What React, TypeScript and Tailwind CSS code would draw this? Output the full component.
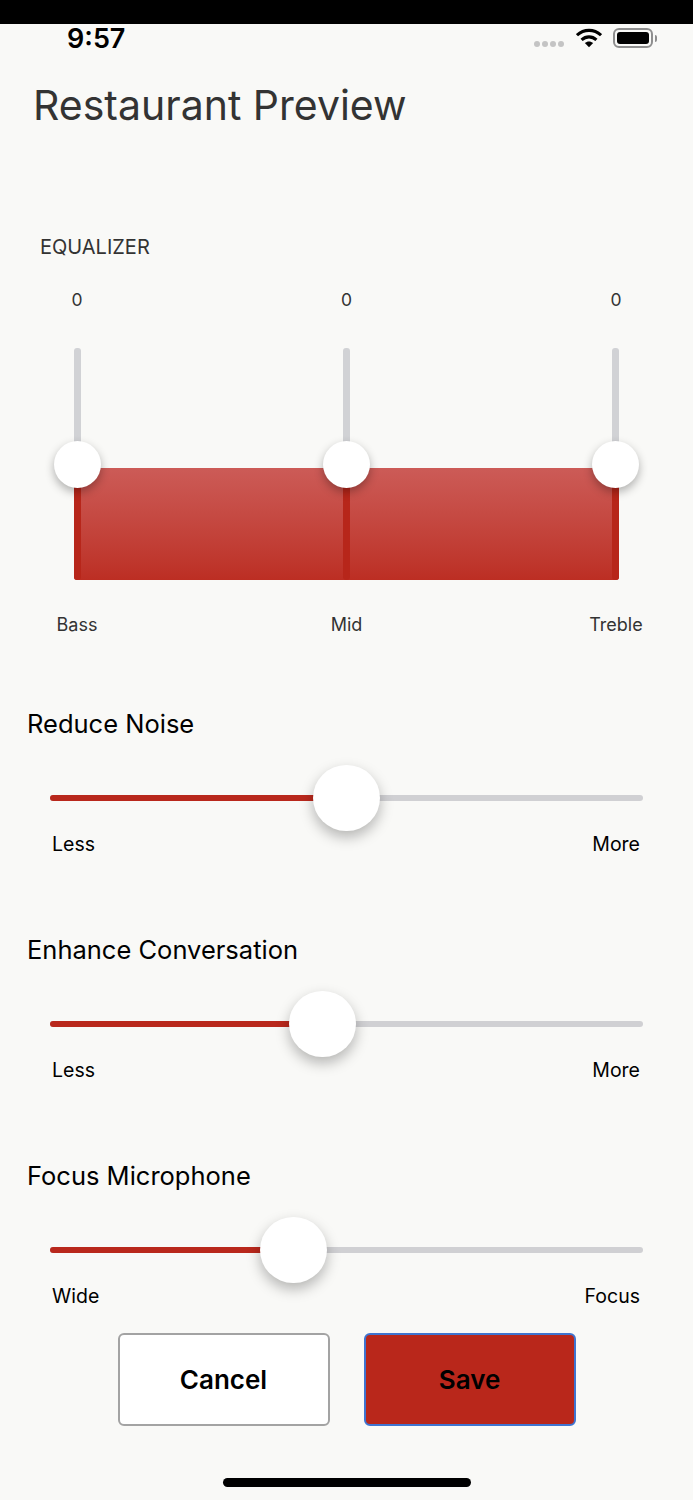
import React from "react";

function Eq() {
  const bands = [
    { v: "0", l: "Bass" },
    { v: "0", l: "Mid" },
    { v: "0", l: "Treble" },
  ];
  return (
    <div className="mt-[104px] px-[27px]">
      <div className="pl-[13px] text-[20px] leading-[24px] text-[#333333]">EQUALIZER</div>
      <div className="mt-[29px] flex justify-between px-[10px] text-[17.5px] leading-[24px] text-[#333333]">
        {bands.map((b, i) => (
          <div key={i} className="w-[80px] text-center">{b.v}</div>
        ))}
      </div>
      <div className="relative mx-[47px] mt-[36px] h-[232px]">
        <div className="absolute bottom-0 left-0 right-0 h-[112px] rounded-[3px] bg-gradient-to-b from-[#cc5b57] to-[#bc2e23]" />
        <div className="relative flex h-full justify-between">
          {bands.map((b, i) => (
            <div key={i} className="relative h-full w-[7px]">
              <div className="h-full w-full rounded-[3px] bg-gradient-to-b from-[#d1d2d5] from-50% to-[#b7261a] to-50%" />
              <div className="absolute left-[-20px] top-[93px] h-[47px] w-[47px] rounded-full bg-white shadow-[0_4px_10px_rgba(0,0,0,0.3)]" />
            </div>
          ))}
        </div>
      </div>
      <div className="mt-[33px] flex justify-between px-[10px] text-[18px] leading-[24px] text-[#333333]">
        {bands.map((b, i) => (
          <div key={i} className="w-[80px] text-center">{b.l}</div>
        ))}
      </div>
    </div>
  );
}

function Slider({ title, left, right, pct, mt }: { title: string; left: string; right: string; pct: number; mt: string }) {
  return (
    <div className={`${mt} px-[27px]`}>
      <div className="text-[25.5px] leading-[32px] text-black">{title}</div>
      <div className="relative mx-[23px] mt-[55px] h-[6px] rounded-full bg-[#d0d0d3]">
        <div className="h-full rounded-full bg-[#b9281c]" style={{ width: `${pct}px` }} />
        <div
          className="absolute top-[-30px] ml-[-33px] h-[66px] w-[67px] rounded-full bg-white shadow-[0_6px_14px_rgba(0,0,0,0.28)]"
          style={{ left: `${pct}px` }}
        />
      </div>
      <div className="mt-[31px] flex justify-between pl-[25px] pr-[26px] text-[19.5px] leading-[24px] text-black">
        <span>{left}</span>
        <span>{right}</span>
      </div>
    </div>
  );
}

export default function App() {
  return (
    <div className="flex h-[1500px] w-[693px] flex-col overflow-hidden bg-[#f9f9f7] font-['Inter',sans-serif]">
      <div className="h-[24px] shrink-0 bg-black" />
      <div className="flex h-[28px] items-center justify-between pl-[67px] pr-[36px]">
        <span className="mt-[2px] text-[27px] font-semibold leading-[28px] text-black">9:57</span>
        <div className="flex items-center">
          <div className="mr-[12px] mt-[12px] flex gap-[2px]">
            <div className="h-[6px] w-[6px] rounded-full bg-[#c4c4c4]" />
            <div className="h-[6px] w-[6px] rounded-full bg-[#c4c4c4]" />
            <div className="h-[6px] w-[6px] rounded-full bg-[#c4c4c4]" />
            <div className="h-[6px] w-[6px] rounded-full bg-[#c4c4c4]" />
          </div>
          <svg width="26" height="20" viewBox="0 0 28 21" className="mr-[11px]">
            <path d="M1 7.5C8.5 0.5 19.5 0.5 27 7.5" fill="none" stroke="#000" strokeWidth="3.4" />
            <path d="M6 12.5C10.8 8.2 17.2 8.2 22 12.5" fill="none" stroke="#000" strokeWidth="3.4" />
            <path d="M9.5 16L14 20.5L18.5 16C15.8 13.7 12.2 13.7 9.5 16Z" fill="#000" />
          </svg>
          <div className="flex items-center">
            <div className="h-[20px] w-[40px] rounded-[6px] border-2 border-[#8e8e8e] p-[2px]">
              <div className="h-full w-full rounded-[3px] bg-black" />
            </div>
            <div className="ml-[2px] h-[7px] w-[2px] rounded-r-[2px] bg-[#8e8e8e]" />
          </div>
        </div>
      </div>
      <h1 className="mt-[27px] pl-[33px] text-[41px] font-normal leading-[52px] text-[#333333]">Restaurant Preview</h1>
      <Eq />
      <Slider mt="mt-[71px]" title="Reduce Noise" left="Less" right="More" pct={296} />
      <Slider mt="mt-[78px]" title="Enhance Conversation" left="Less" right="More" pct={272} />
      <Slider mt="mt-[78px]" title="Focus Microphone" left="Wide" right="Focus" pct={243} />
      <div className="mt-[25px] flex justify-center gap-[34px]">
        <button className="h-[93px] w-[212px] rounded-[6px] border-2 border-[#a3a3a3] bg-white text-[26px] font-semibold text-black">Cancel</button>
        <button className="h-[93px] w-[212px] rounded-[6px] border-2 border-[#3f74d0] bg-[#b9271b] text-[26px] font-semibold text-black">Save</button>
      </div>
      <div className="mt-auto mb-[13px] h-[9px] w-[248px] self-center rounded-full bg-black" />
    </div>
  );
}
